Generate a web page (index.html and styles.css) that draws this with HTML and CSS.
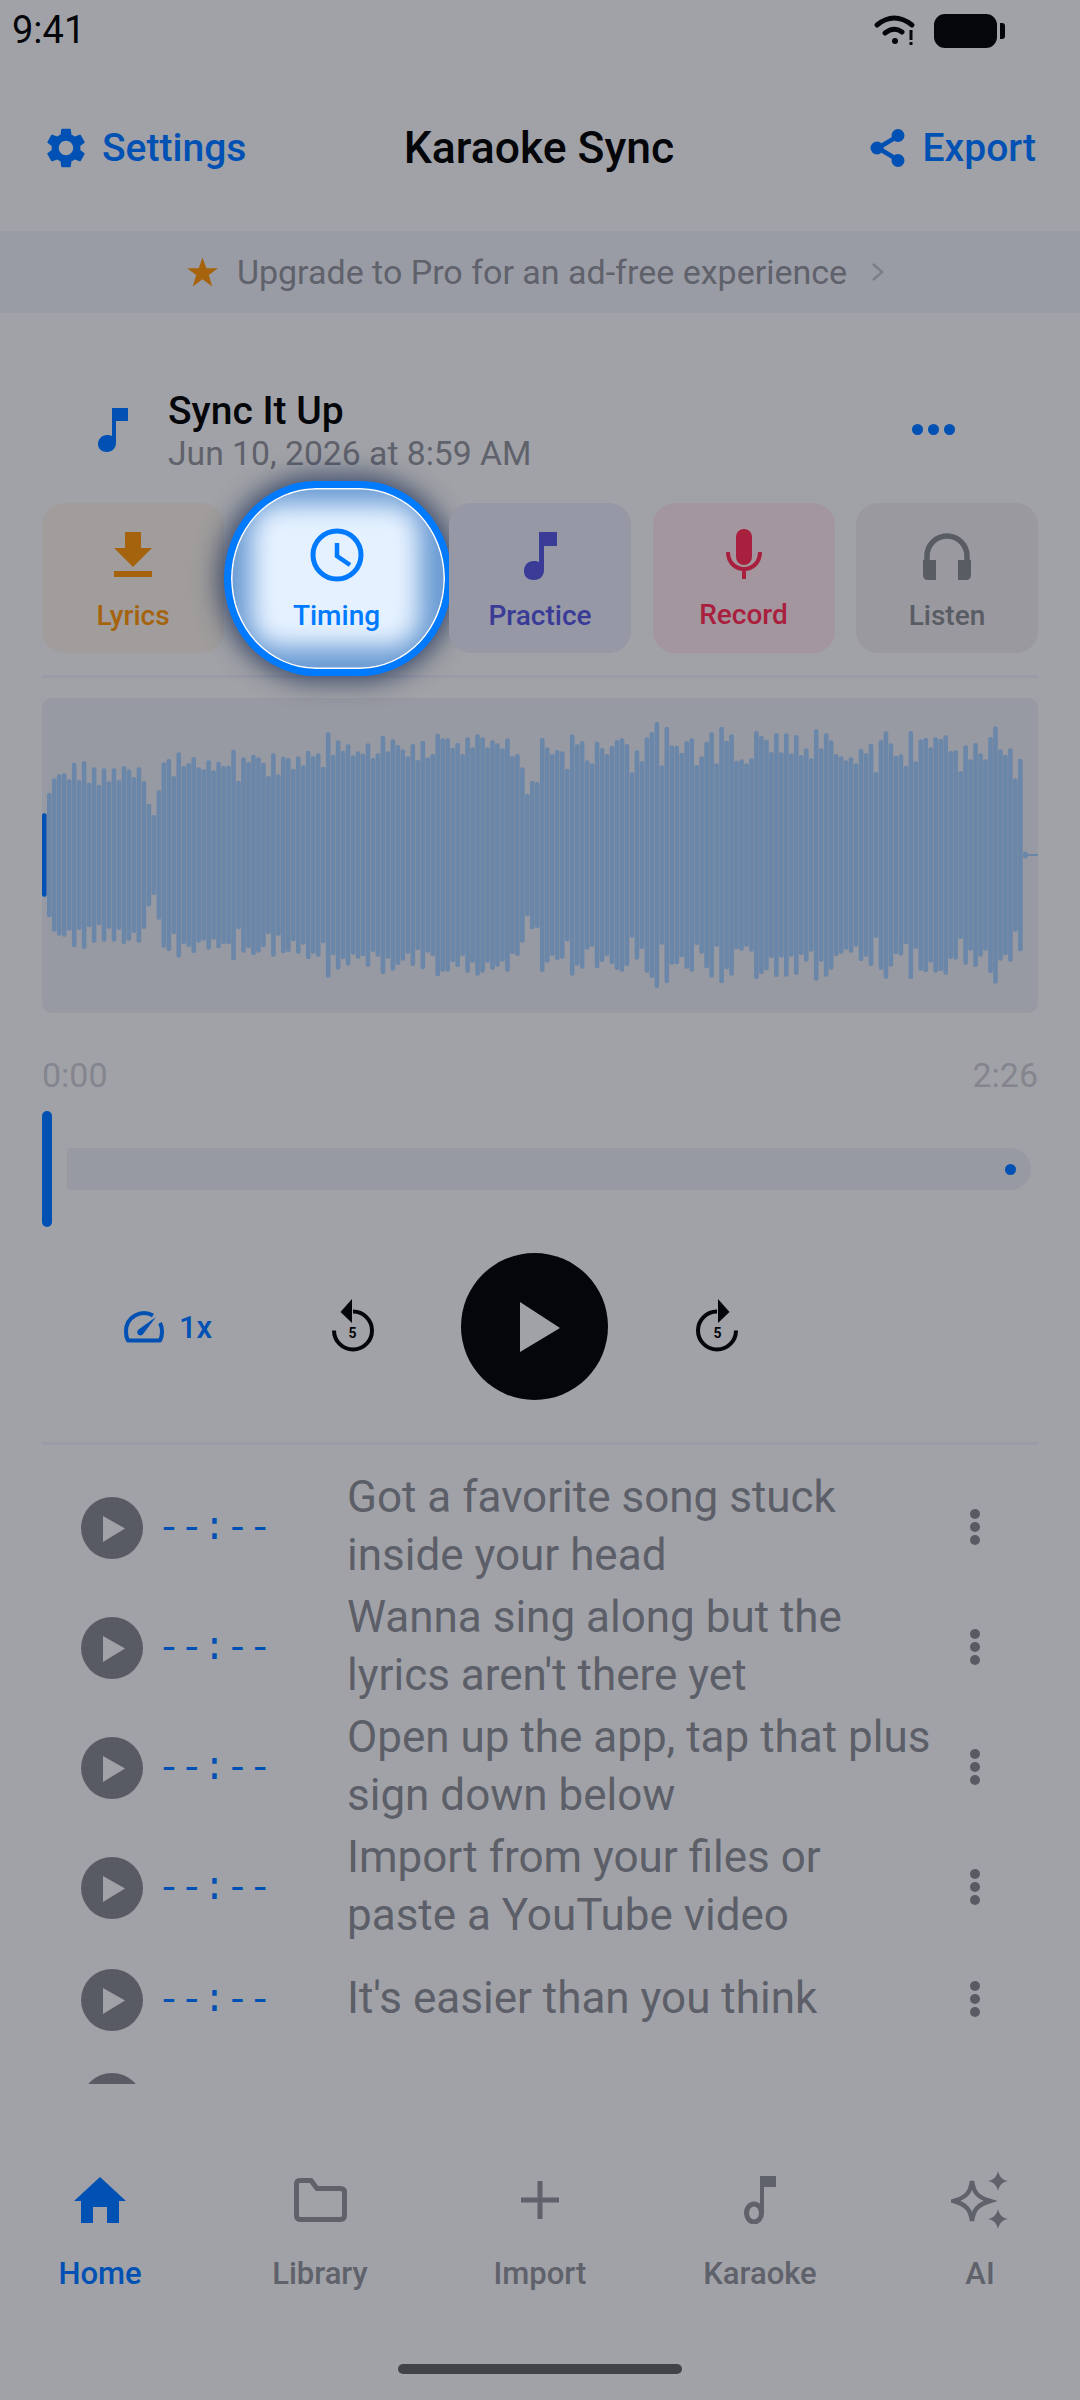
FILE: index.html
```html
<!DOCTYPE html>
<html lang="en">
<head>
<meta charset="utf-8">
<title>Karaoke Sync</title>
<link rel="stylesheet" href="styles.css">
</head>
<body>
<div class="screen">
  <div class="status">
    <span class="clock-text">9:41</span>
    <div class="status-icons">
      <svg class="wifi" viewBox="0 0 40 28"><path d="M2 8Q19-6 37 8" class="wifi-arc"/><path d="M10 16Q19 9 27 15" class="wifi-arc"/><circle cx="20" cy="24" r="3"/><rect x="34.500" y="13" width="3" height="10"/><rect x="34.500" y="25" width="3" height="3"/></svg>
      <div class="battery"></div>
      <div class="battery-nub"></div>
    </div>
  </div>

  <header class="topbar">
    <div class="top-action left">
      <svg class="gear" viewBox="0 0 24 24"><path d="M19.14 12.94c.04-.3.06-.61.06-.94 0-.32-.02-.64-.07-.94l2.03-1.58a.49.49 0 0 0 .12-.61l-1.92-3.32a.488.488 0 0 0-.59-.22l-2.39.96c-.5-.38-1.03-.7-1.62-.94l-.36-2.54a.484.484 0 0 0-.48-.41h-3.84c-.24 0-.43.17-.47.41l-.36 2.54c-.59.24-1.13.57-1.62.94l-2.39-.96c-.22-.08-.47 0-.59.22L2.74 8.87c-.12.21-.08.47.12.61l2.03 1.58c-.05.3-.09.63-.09.94s.02.64.07.94l-2.03 1.58a.49.49 0 0 0-.12.61l1.92 3.32c.12.22.37.29.59.22l2.39-.96c.5.38 1.03.7 1.62.94l.36 2.54c.05.24.24.41.48.41h3.84c.24 0 .44-.17.47-.41l.36-2.54c.59-.24 1.13-.56 1.62-.94l2.39.96c.22.08.47 0 .59-.22l1.92-3.32c.12-.22.07-.47-.12-.61l-2.01-1.58zM12 15.6c-1.98 0-3.6-1.62-3.6-3.6s1.62-3.6 3.6-3.6 3.6 1.62 3.6 3.6-1.62 3.6-3.6 3.6z"/></svg>
      <span>Settings</span>
    </div>
    <h1 class="app-title">Karaoke Sync</h1>
    <div class="top-action right">
      <svg class="share" viewBox="0 0 36 38"><path d="M28 7 8 19l20 12" class="share-line"/><circle cx="28" cy="6.500" r="6.500"/><circle cx="7" cy="19" r="6.500"/><circle cx="28" cy="31.500" r="6.500"/></svg>
      <span>Export</span>
    </div>
  </header>

  <div class="banner">
    <svg class="star" viewBox="0 0 32 30"><path d="M16 0l4 11h12l-9.500 7L26 30l-10-7.500L6 30l3.500-12L0 11h12z"/></svg>
    <span class="banner-text">Upgrade to Pro for an ad-free experience</span>
    <svg class="chevron" viewBox="0 0 14 20"><path d="M2 2l9 8-9 8"/></svg>
  </div>

  <section class="song">
    <svg class="song-note" viewBox="0 0 30 44"><path d="M14 0h16v13H18v22c0 5-4 9-9 9s-9-3-9-8 4-9 9-9c2 0 3.500.4 5 1z"/></svg>
    <div class="song-info">
      <div class="song-title">Sync It Up</div>
      <div class="song-date">Jun 10, 2026 at 8:59 AM</div>
    </div>
    <div class="more"><i></i><i></i><i></i></div>
  </section>

  <nav class="modes">
    <div class="mode lyrics">
      <svg viewBox="0 0 38 46"><path d="M11 0h16v16h11L19 35 0 16h11z"/><rect y="39" width="38" height="6"/></svg>
      <span>Lyrics</span>
    </div>
    <div class="mode timing">
      <div class="spot"></div>
      <svg viewBox="0 0 54 54"><circle cx="27" cy="27" r="24" class="clock-ring"/><path d="M27 15v13l13 9" class="clock-hand"/></svg>
      <span>Timing</span>
    </div>
    <div class="mode practice">
      <svg viewBox="0 0 33 48"><path d="M15 0h18v14H20v24c0 6-4 10-10 10S0 45 0 39s4-10 10-10c2 0 4 .5 5 1z"/></svg>
      <span>Practice</span>
    </div>
    <div class="mode record">
      <svg viewBox="0 0 36 50"><rect x="10" y="0" width="16" height="36" rx="8"/><path d="M2 23c0 10 7 17 16 17s16-7 16-17M18 40v10" class="mic-arc"/></svg>
      <span>Record</span>
    </div>
    <div class="mode listen">
      <svg viewBox="0 0 48 48"><path d="M4 30V24a20 20 0 0 1 40 0v6" class="phones-band"/><path d="M0 28h13v20H5q-5 0-5-5zM48 28H35v20h8q5 0 5-5z"/></svg>
      <span>Listen</span>
    </div>
  </nav>

  <div class="rule rule-modes"></div>

  <div class="wave" id="wave"></div>

  <div class="times"><span>0:00</span><span>2:26</span></div>

  <div class="scrub">
    <div class="scrub-head"></div>
    <div class="scrub-track"><i></i></div>
  </div>

  <div class="controls">
    <div class="speed">
      <svg viewBox="0 0 40 32"><path d="M29 4.500A18 18 0 0 0 2 20c0 4 .5 7 2 9.500h32c1.500-2.500 2-5.500 2-9.500 0-3-.5-5-2-8" class="gauge-arc"/><path d="M32 6 19.500 22.500a3.300 3.300 0 1 1-5-4z"/></svg>
      <span>1x</span>
    </div>
    <svg class="skip back" viewBox="0 0 44 54"><path d="M21 12.500a19 19 0 1 1-19 19" class="skip-arc"/><path d="M20 0 8.500 13 20 24z"/><text x="20.500" y="39" class="skip-num">5</text></svg>
    <div class="play"><svg viewBox="0 0 40 50"><path d="M0 0l40 26L0 50z"/></svg></div>
    <svg class="skip fwd" viewBox="0 0 44 54"><path d="M23 12.500a19 19 0 1 0 19 19" class="skip-arc"/><path d="M24 0l11.500 13L24 24z"/><text x="23.500" y="39" class="skip-num">5</text></svg>
  </div>

  <div class="rule rule-controls"></div>

  <section class="lines">
    <div class="line">
      <div class="line-play"><svg viewBox="0 0 22 27"><path d="M0 1l22 12.500L0 27z"/></svg></div>
      <span class="stamp">--:--</span>
      <p class="lyric">Got a favorite song stuck<br>inside your head</p>
      <div class="kebab"><i></i><i></i><i></i></div>
    </div>
    <div class="line">
      <div class="line-play"><svg viewBox="0 0 22 27"><path d="M0 1l22 12.500L0 27z"/></svg></div>
      <span class="stamp">--:--</span>
      <p class="lyric">Wanna sing along but the<br>lyrics aren't there yet</p>
      <div class="kebab"><i></i><i></i><i></i></div>
    </div>
    <div class="line">
      <div class="line-play"><svg viewBox="0 0 22 27"><path d="M0 1l22 12.500L0 27z"/></svg></div>
      <span class="stamp">--:--</span>
      <p class="lyric">Open up the app, tap that plus<br>sign down below</p>
      <div class="kebab"><i></i><i></i><i></i></div>
    </div>
    <div class="line">
      <div class="line-play"><svg viewBox="0 0 22 27"><path d="M0 1l22 12.500L0 27z"/></svg></div>
      <span class="stamp">--:--</span>
      <p class="lyric">Import from your files or<br>paste a YouTube video</p>
      <div class="kebab"><i></i><i></i><i></i></div>
    </div>
    <div class="line single">
      <div class="line-play"><svg viewBox="0 0 22 27"><path d="M0 1l22 12.500L0 27z"/></svg></div>
      <span class="stamp">--:--</span>
      <p class="lyric">It's easier than you think</p>
      <div class="kebab"><i></i><i></i><i></i></div>
    </div>
    <div class="line single">
      <div class="line-play"></div>
    </div>
  </section>

  <nav class="tabs">
    <div class="tab active">
      <div class="tab-icon"><svg class="i-home" viewBox="0 0 52 46"><path d="M26 0l26 24h-7v22H33V30H19v16H7V24H0z"/></svg></div>
      <span>Home</span>
    </div>
    <div class="tab">
      <div class="tab-icon"><svg class="i-folder" viewBox="0 0 53 44"><path d="M2.500 6q0-3.500 3.500-3.500h11l6 8h23.500q4 0 4 4V37q0 4.500-4 4.500H6q-3.500 0-3.500-4.500z"/></svg></div>
      <span>Library</span>
    </div>
    <div class="tab">
      <div class="tab-icon"><svg class="i-plus" viewBox="0 0 38 38"><path d="M19 0v38M0 19h38"/></svg></div>
      <span>Import</span>
    </div>
    <div class="tab">
      <div class="tab-icon"><svg class="i-knote" viewBox="0 0 32 48"><path d="M18 4v33" class="knote-stem"/><ellipse cx="10" cy="37" rx="7.500" ry="9" class="knote-head"/><rect x="16" y="0" width="16" height="11"/></svg></div>
      <span>Karaoke</span>
    </div>
    <div class="tab">
      <div class="tab-icon"><svg class="i-spark" viewBox="0 0 58 58"><path d="M21 10c1.500 11 5 16 18 20-13 4-16.500 9-18 20-1.500-11-5-16-18-20 13-4 16.500-9 18-20z" class="spark-line"/><path d="M47 0c1 5 4 9 10 10-6 1-9 5-10 10-1-5-4-9-10-10 6-1 9-5 10-10zM47 38c1 5 4 9 10 10-6 1-9 5-10 10-1-5-4-9-10-10 6-1 9-5 10-10z"/></svg></div>
      <span>AI</span>
    </div>
  </nav>

  <div class="home-bar"></div>
</div>
<script src="waveform.js"></script>
</body>
</html>
```

FILE: styles.css
```css
* { box-sizing: border-box; }
html, body { margin: 0; padding: 0; }
body { background: #a1a2a7; font-family: Roboto, "Liberation Sans", sans-serif; color: #000; }
.screen { width: 1080px; height: 2400px; overflow: hidden; display: flex; flex-direction: column; background: #a1a2a7; }

.status { height: 57px; padding: 8px 75px 0 12px; display: flex; justify-content: space-between; align-items: flex-start; }
.clock-text { font-size: 38px; line-height: 44px; color: #05060a; }
.status-icons { display: flex; align-items: center; padding-top: 6px; }
.wifi { width: 40px; height: 28px; fill: #05060a; margin-right: 19px; overflow: visible; }
.wifi-arc { fill: none; stroke: #05060a; stroke-width: 5; stroke-linecap: round; }
.battery { width: 63px; height: 34px; background: #05060a; border-radius: 11px; }
.battery-nub { width: 5px; height: 16px; margin-left: 3px; background: #05060a; border-radius: 0 3px 3px 0; }

.topbar { height: 174px; padding: 8px 44px 0 42px; display: flex; align-items: center; justify-content: space-between; }
.top-action { display: flex; align-items: center; width: 210px; color: #0051b3; font-size: 39px; font-weight: 500; }
.top-action.right { justify-content: flex-end; }
.top-action svg { fill: #0051b3; flex: none; }
.gear { width: 48px; height: 48px; margin-right: 12px; }
.share { width: 36px; height: 38px; margin-right: 17px; }
.share-line { fill: none; stroke: #0051b3; stroke-width: 4.500; }
.app-title { margin: 0; font-size: 44.500px; line-height: 48px; font-weight: 500; color: #05060a; }

.banner { height: 82px; background: #9a9ca5; display: flex; align-items: center; justify-content: center; padding-right: 8px; }
.star { width: 31px; height: 30px; fill: #a5630d; margin-right: 19px; }
.banner-text { font-size: 34px; color: #5f616b; }
.chevron { width: 14px; height: 20px; margin-left: 24px; fill: none; stroke: #7d7f88; stroke-width: 2.500; }

.song { height: 84px; margin: 76px 0 30px; padding-left: 98px; display: flex; align-items: center; }
.song-note { width: 30px; height: 44px; fill: #0051b3; margin-top: -3px; }
.song-info { margin-left: 40px; flex: 1; }
.song-title { font-size: 39px; line-height: 42px; font-weight: 500; color: #05060a; }
.song-date { margin-top: 3px; font-size: 33.700px; line-height: 38px; color: #5f616b; }
.more { display: flex; gap: 5px; margin: -4px 125px 0 0; }
.more i { width: 11px; height: 11px; border-radius: 50%; background: #0051b3; }

.modes { height: 150px; margin: 0 42px; display: flex; justify-content: space-between; }
.mode { position: relative; width: 182px; border-radius: 22px; display: flex; flex-direction: column; align-items: center; font-size: 28px; font-weight: 500; }
.mode svg { position: relative; height: 50px; margin-top: 27px; }
.mode span { position: relative; margin-top: 19px; line-height: 34px; }
.lyrics { background: #a09d9c; color: #a5630d; }
.lyrics svg { fill: #a5630d; width: 38px; height: 46px; margin-top: 29px; margin-bottom: 2px; }
.timing { color: #007aff; }
.timing svg { width: 54px; height: 54px; margin-top: 25px; margin-bottom: -2px; }
.practice { background: #9698a6; color: #3a3a97; }
.practice svg { fill: #3a3a97; width: 33px; height: 48px; margin-top: 29px; }
.record { background: #a3969f; color: #a91f3e; }
.record svg { fill: #a91f3e; width: 36px; margin-top: 26px; }
.listen { background: #99999f; color: #5a5c64; }
.listen svg { fill: #5a5c64; width: 48px; height: 48px; margin-top: 29px; }

.spot { position: absolute; left: -22px; right: -24px; top: -22px; bottom: -23px; border: 7px solid #007aff; border-radius: 92px / 97.500px; background: #6a9bd3; overflow: hidden; box-shadow: 0 0 24px 6px rgba(25, 45, 85, .72), inset 0 0 0 1.500px #fff; }
.spot::before { content: ""; position: absolute; left: 20px; right: 25px; top: 16px; bottom: 22px; border-radius: 30px; background: #e5f1ff; filter: blur(12px); }
.clock-ring { fill: none; stroke: #007aff; stroke-width: 5; }
.clock-hand { fill: none; stroke: #007aff; stroke-width: 4.500; }
.mic-arc { fill: none; stroke: #a91f3e; stroke-width: 4; }
.phones-band { fill: none; stroke: #5a5c64; stroke-width: 5.500; }

.rule { height: 3px; margin: 0 42px; background: #9a9ba6; flex: none; }
.rule-modes { margin-top: 22px; }
.rule-controls { margin-top: 42px; }

.wave { height: 315px; margin: 20px 42px 0; background: #989aa3; border-radius: 10px; overflow: hidden; flex: none; }
.wave svg { display: block; width: 996px; height: 315px; }
.wave .bar { fill: #6a86a8; }
.wave .bar-now { fill: #0051b3; }

.times { margin: 44px 42px 0; display: flex; justify-content: space-between; font-size: 34px; line-height: 36px; color: #84858e; }

.scrub { height: 116px; margin: 18px 49px 0 42px; display: flex; align-items: center; gap: 15px; flex: none; }
.scrub-head { width: 10px; height: 116px; border-radius: 5px; background: #0051b3; }
.scrub-track { flex: 1; height: 42px; background: #989aa3; border-radius: 3px 21px 21px 3px; display: flex; align-items: center; justify-content: flex-end; padding-right: 15px; }
.scrub-track i { width: 11px; height: 11px; border-radius: 50%; background: #0051b3; }

.controls { height: 147px; margin-top: 26px; padding-left: 124px; display: flex; align-items: center; flex: none; }
.speed { width: 208px; display: flex; align-items: center; color: #0051b3; font-size: 31px; font-weight: 500; margin-top: 1px; }
.speed svg { width: 40px; height: 32px; fill: #0051b3; margin-right: 15px; overflow: visible; }
.gauge-arc { fill: none; stroke: #0051b3; stroke-width: 4; stroke-linejoin: round; }
.skip { width: 44px; height: 54px; fill: #05060a; flex: none; }
.skip-arc { fill: none; stroke: #05060a; stroke-width: 4; }
.skip-num { font-size: 14px; font-weight: 700; text-anchor: middle; fill: #05060a; }
.skip.back { margin-right: 85px; margin-top: -1px; }
.skip.fwd { margin-left: 86px; margin-top: -1px; }
.play { width: 147px; height: 147px; border-radius: 50%; background: #05060a; display: flex; align-items: center; justify-content: center; padding-left: 10px; }
.play svg { width: 40px; height: 50px; fill: #a1a2a7; }

.lines { height: 639px; overflow: hidden; padding-top: 23px; flex: none; }
.line { height: 120px; padding-left: 81px; display: flex; align-items: center; }
.line.single { height: 104px; }
.line-play { width: 62px; height: 62px; border-radius: 50%; background: #595b64; flex: none; display: flex; align-items: center; justify-content: center; padding-left: 4px; }
.line-play svg { width: 22px; height: 27px; fill: #a1a2a7; }
.stamp { width: 204px; padding-left: 14.500px; flex: none; font-family: "Liberation Mono", monospace; font-size: 38px; color: #0051b3; }
.lyric { margin: 0 0 5px; width: 621px; font-size: 44px; line-height: 58px; color: #5c5e68; }
.kebab { margin: -3px 0 0 2px; display: flex; flex-direction: column; gap: 3px; }
.kebab i { width: 10px; height: 10px; border-radius: 50%; background: #595b64; }

.tabs { margin-top: 86px; padding: 0 20px; display: flex; justify-content: space-between; flex: none; }
.tab { width: 160px; display: flex; flex-direction: column; align-items: center; font-size: 31px; font-weight: 500; line-height: 36px; color: #5f616b; }
.tab.active { color: #0051b3; }
.tab-icon { height: 60px; margin-bottom: 26px; display: flex; align-items: center; justify-content: center; }
.i-home { width: 52px; height: 46px; fill: #0051b3; }
.i-folder { width: 53px; height: 44px; fill: none; stroke: #5f616b; stroke-width: 5; }
.i-plus { width: 38px; height: 38px; fill: none; stroke: #5f616b; stroke-width: 5; }
.i-knote { width: 32px; height: 48px; fill: #5f616b; }
.knote-stem { fill: none; stroke: #5f616b; stroke-width: 4; }
.knote-head { fill: none; stroke: #5f616b; stroke-width: 5; }
.i-spark { width: 58px; height: 58px; fill: #5f616b; }
.spark-line { fill: none; stroke: #5f616b; stroke-width: 4.500; }

.home-bar { width: 284px; height: 10px; margin: 72px auto 0; border-radius: 5px; background: #424347; flex: none; }
```

FILE: waveform.js
```js
var tops = [400,338,295,283,280,298,248,300,243,308,262,314,265,304,265,300,258,268,291,262,303,371,405,331,247,237,288,217,258,249,231,262,268,241,271,245,258,257,209,302,232,246,224,232,248,288,220,283,230,234,266,229,256,212,229,220,260,157,224,181,212,193,226,214,221,190,234,220,167,214,178,195,208,229,192,240,182,232,222,161,175,175,203,189,222,172,202,163,172,202,181,190,205,175,228,222,262,341,302,306,
174,202,222,210,214,266,163,193,184,241,250,185,204,222,198,180,175,192,277,211,243,172,156,126,256,140,196,197,218,184,175,255,229,185,157,250,140,182,163,242,238,250,235,153,168,179,216,159,217,160,220,165,225,205,235,148,205,160,181,222,229,241,232,250,206,220,191,276,180,154,190,227,223,257,153,244,178,173,202,172,177,166,213,211,273,196,238,189,220,238,171,139,208,224,205,295,236];
var NS = "http://www.w3.org/2000/svg";
var svg = document.createElementNS(NS, "svg");
svg.setAttribute("viewBox", "0 0 996 315");
var mid = 157, pitch = 4.98, w = 4.6;
function bar(x, half, cls) {
  var r = document.createElementNS(NS, "rect");
  r.setAttribute("x", x);
  r.setAttribute("y", mid - half);
  r.setAttribute("width", w);
  r.setAttribute("height", half * 2);
  r.setAttribute("rx", 2);
  r.setAttribute("class", cls);
  svg.appendChild(r);
}
tops.forEach(function (t, i) {
  bar(i * pitch, (525 - t) / 3, i === 0 ? "bar bar-now" : "bar");
});
bar(tops.length * pitch, 3.5, "bar");
var tail = document.createElementNS(NS, "rect");
tail.setAttribute("x", tops.length * pitch + 3);
tail.setAttribute("y", mid - 1);
tail.setAttribute("width", 16);
tail.setAttribute("height", 2);
tail.setAttribute("class", "bar");
svg.appendChild(tail);
document.getElementById("wave").appendChild(svg);
```
